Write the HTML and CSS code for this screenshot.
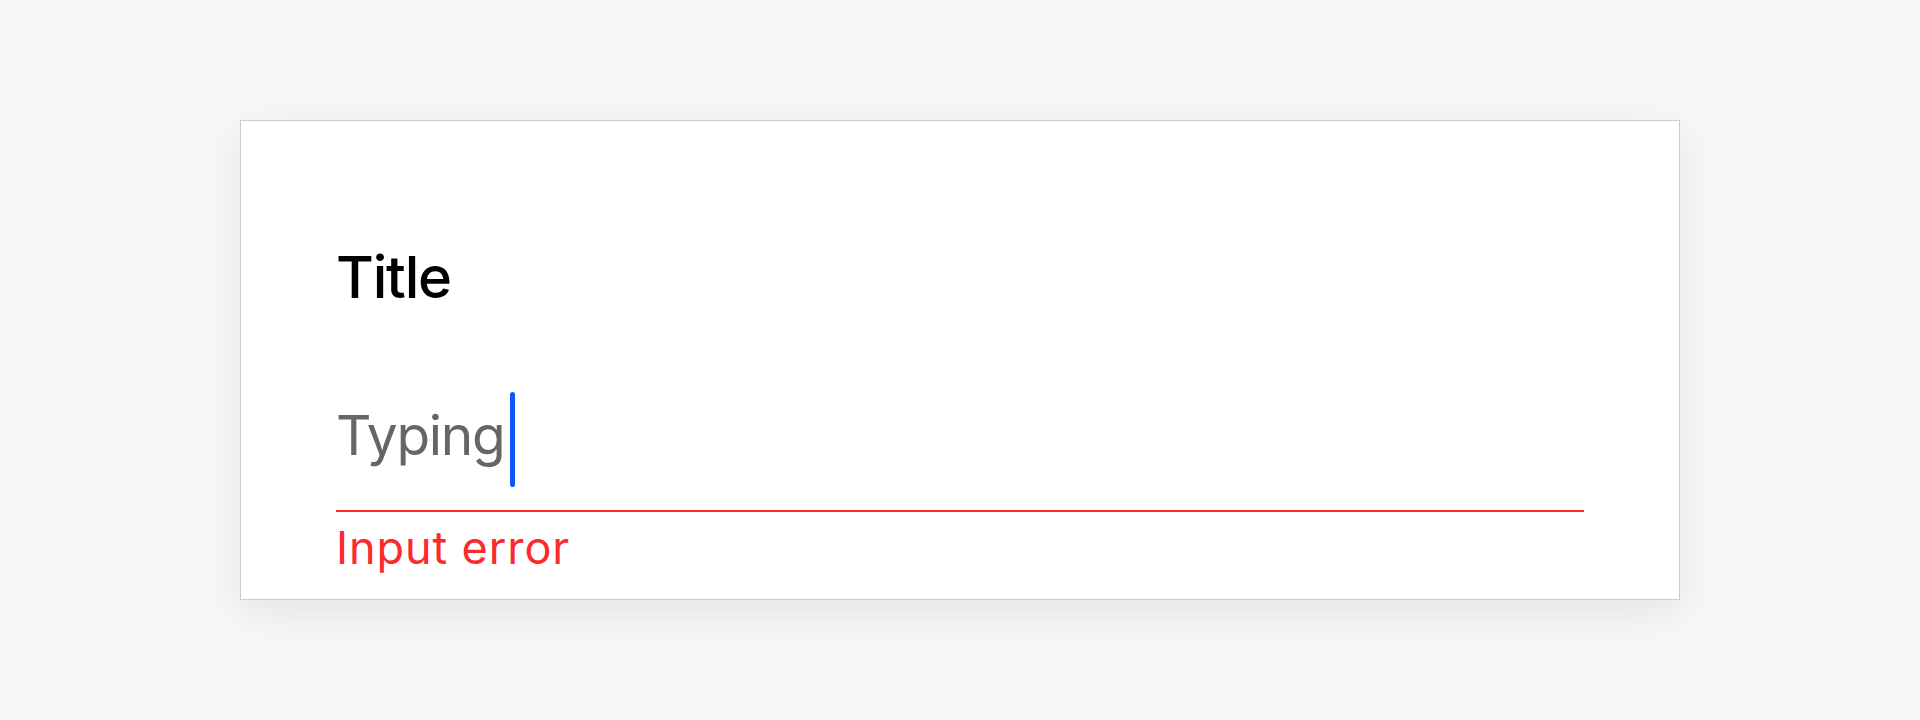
FILE: index.html
```html
<!DOCTYPE html>
<html>
<head>
<meta charset="utf-8">
<link rel="stylesheet" href="styles.css">
</head>
<body>
<div class="card">
  <div class="title">Title</div>
  <div class="input-row">
    <span class="input-text">Typing</span>
    <span class="cursor"></span>
  </div>
  <div class="error">Input error</div>
</div>
</body>
</html>
```
FILE: styles.css
```css
html, body {
  margin: 0;
  padding: 0;
  background: #f7f7f7;
}
body {
  padding: 120px 240px;
  font-family: Inter, "Noto Sans", sans-serif;
}
.card {
  box-sizing: border-box;
  width: 1440px;
  height: 480px;
  background: #ffffff;
  border: 1px solid #cccccc;
  box-shadow: 0 12px 40px rgba(0, 0, 0, 0.08);
  padding: 120px 95px 0 95px;
  overflow: hidden;
}
.title {
  font-size: 58px;
  line-height: 72px;
  font-weight: 500;
  letter-spacing: -1.2px;
  color: #000000;
}
.input-row {
  display: flex;
  align-items: flex-start;
  margin-top: 74px;
  padding-bottom: 23px;
  border-bottom: 2px solid #fa2a2d;
}
.input-text {
  font-size: 55px;
  line-height: 96px;
  letter-spacing: -1.3px;
  color: #666666;
}
.cursor {
  width: 5px;
  height: 95px;
  margin-top: 5px;
  margin-left: 6px;
  border-radius: 3px;
  background: #0a59f7;
}
.error {
  margin-top: 10px;
  font-size: 45px;
  line-height: 52px;
  letter-spacing: 0.9px;
  color: #fa2a2d;
}
```
